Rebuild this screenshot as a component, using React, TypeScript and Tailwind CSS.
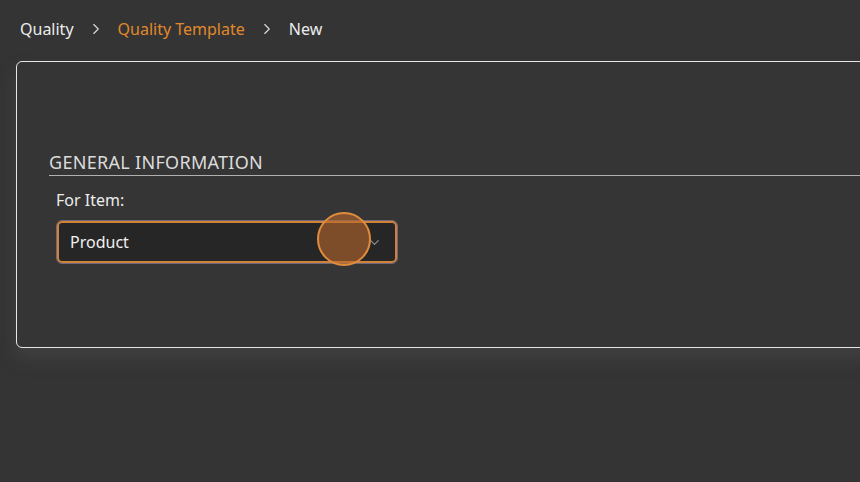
import React from 'react';
import { ChevronRight, ChevronDown } from 'lucide-react';

export default function App() {
  return (
    <div
      className="h-[482px] w-[860px] overflow-hidden bg-[#343434] text-[#e8e8e8]"
      style={{ fontFamily: '"Noto Sans", "Open Sans", sans-serif' }}
    >
      {/* breadcrumb */}
      <div className="flex h-[58px] items-center pl-5 text-[16px]">
        <span className="text-[#ececec]">Quality</span>
        <ChevronRight className="mx-[13px] h-[18px] w-[18px] text-[#dcdcdc]" strokeWidth={1.5} />
        <span className="text-[#e0892c]">Quality Template</span>
        <ChevronRight className="mx-[13px] h-[18px] w-[18px] text-[#dcdcdc]" strokeWidth={1.5} />
        <span className="text-[#ececec]">New</span>
      </div>

      <div className="ml-4 mt-[3px] h-[287px] w-[880px] rounded-[6px] border border-[#e6e6e6] bg-[#353535] pl-[32px] pt-[89px] shadow-[0_10px_18px_rgba(90,90,90,0.35)]">
        <div className="border-b border-[#b0b0b0] pb-[1px] text-[18px] leading-[23px] tracking-[0.3px] text-[#dcdcdc]">
          GENERAL INFORMATION
        </div>
        <div className="pl-[7px] pt-[13px]">
          <div className="text-[16px] leading-[22px] text-[#ececec]">For Item:</div>
          <div className="relative mt-[9px] w-[342px] rounded-[6px] border border-[#6f6680]">
            <div className="flex h-[42px] items-center justify-between rounded-[5px] border-2 border-[#cf8238] bg-[#262626] pl-[11px] pr-[13px]">
              <span className="text-[16px] text-[#f0f0f0]">Product</span>
              <ChevronDown className="h-[15px] w-[15px] text-[#8a8a8a]" strokeWidth={2} />
            </div>
            <div className="absolute left-[260px] top-[-9px] h-[54px] w-[54px] rounded-full border-2 border-[#e08c3c] bg-[#b8682c]/60" />
          </div>
        </div>
      </div>
    </div>
  );
}
